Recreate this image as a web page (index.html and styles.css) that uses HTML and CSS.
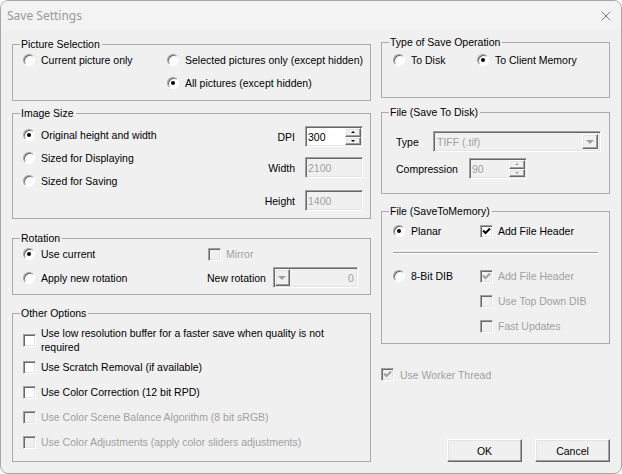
FILE: index.html
```html
<!DOCTYPE html>
<html lang="en">
  <head>
    <meta charset="UTF-8" />
    <title>Save Settings</title>
    <link rel="stylesheet" href="styles.css">
  </head>
  <body>
    <div class="window">
      <div class="titlebar">
        <span class="title">Save Settings</span>
        <svg class="close" width="10" height="10" viewBox="0 0 10 10">
          <path d="M0.5 0.5 L9.5 9.5 M9.5 0.5 L0.5 9.5" stroke="#7a7a7a" stroke-width="1" fill="none" />
        </svg>
      </div>

      <div class="content">
        <div class="col-left">
          <div class="group pic-sel">
            <div class="group-title">Picture Selection</div>
            <div class="pic-grid">
              <div class="opt"><span class="radio"></span>Current picture only</div>
              <div class="opt"><span class="radio"></span>Selected pictures only (except hidden)</div>
              <span></span>
              <div class="opt"><span class="radio on"></span>All pictures (except hidden)</div>
            </div>
          </div>

          <div class="group img-size">
            <div class="group-title">Image Size</div>
            <div class="img-body">
              <div class="radio-list">
                <div class="opt"><span class="radio on"></span>Original height and width</div>
                <div class="opt"><span class="radio"></span>Sized for Displaying</div>
                <div class="opt"><span class="radio"></span>Sized for Saving</div>
              </div>
              <div class="dims">
                <div class="dim-row">
                  <span>DPI</span>
                  <div class="field sunken">
                    <span>300</span>
                    <div class="spin">
                      <div class="spin-btn raised"><span class="tri-up"></span></div>
                      <div class="spin-btn raised"><span class="tri-down"></span></div>
                    </div>
                  </div>
                </div>
                <div class="dim-row gap-10">
                  <span>Width</span>
                  <div class="field sunken off">2100</div>
                </div>
                <div class="dim-row gap-12">
                  <span>Height</span>
                  <div class="field sunken off">1400</div>
                </div>
              </div>
            </div>
          </div>

          <div class="group rotation">
            <div class="group-title">Rotation</div>
            <div class="rot-grid">
              <div class="opt"><span class="radio on"></span>Use current</div>
              <div class="opt dim"><span class="check off"></span>Mirror</div>
              <div class="opt"><span class="radio"></span>Apply new rotation</div>
              <div class="opt">
                New rotation
                <div class="rot-combo sunken">
                  <div class="drop-btn raised"><span class="tri-drop"></span></div>
                  <span class="rot-value">0</span>
                </div>
              </div>
            </div>
          </div>

          <div class="group other">
            <div class="group-title">Other Options</div>
            <div class="check-list">
              <div class="opt"><span class="check"></span><span class="wrap">Use low resolution buffer for a faster save when quality is not required</span></div>
              <div class="opt first-after"><span class="check"></span>Use Scratch Removal (if available)</div>
              <div class="opt"><span class="check"></span>Use Color Correction (12 bit RPD)</div>
              <div class="opt dim"><span class="check off"></span>Use Color Scene Balance Algorithm (8 bit sRGB)</div>
              <div class="opt dim"><span class="check off"></span>Use Color Adjustments (apply color sliders adjustments)</div>
            </div>
          </div>
        </div>

        <div class="col-right">
          <div class="group save-type">
            <div class="group-title">Type of Save Operation</div>
            <div class="type-grid">
              <div class="opt"><span class="radio"></span>To Disk</div>
              <div class="opt"><span class="radio on"></span>To Client Memory</div>
            </div>
          </div>

          <div class="group disk">
            <div class="group-title">File (Save To Disk)</div>
            <div class="disk-body">
              <div class="disk-row">
                <span class="lbl-type">Type</span>
                <div class="combo sunken off">
                  <span>TIFF (.tif)</span>
                  <div class="drop-btn raised"><span class="tri-drop"></span></div>
                </div>
              </div>
              <div class="disk-row second">
                <span class="lbl-comp">Compression</span>
                <div class="field sunken off">
                  <span>90</span>
                  <div class="spin">
                    <div class="spin-btn raised"><span class="tri-up grey"></span></div>
                    <div class="spin-btn raised"><span class="tri-down grey"></span></div>
                  </div>
                </div>
              </div>
            </div>
          </div>

          <div class="group memory">
            <div class="group-title">File (SaveToMemory)</div>
            <div class="mem-row">
              <div class="opt"><span class="radio on"></span>Planar</div>
              <div class="opt">
                <span class="check">
                  <svg width="9" height="9" viewBox="0 0 9 9"><path d="M1 3.5 L3.5 6 L8 1.5" stroke="#000" stroke-width="2" fill="none" /></svg>
                </span>Add File Header
              </div>
            </div>
            <div class="separator"></div>
            <div class="mem-row lower">
              <div class="opt"><span class="radio"></span>8-Bit DIB</div>
              <div class="mem-checks">
                <div class="opt dim">
                  <span class="check off">
                    <svg width="9" height="9" viewBox="0 0 9 9"><path d="M1 3.5 L3.5 6 L8 1.5" stroke="#a0a0a0" stroke-width="2" fill="none" /></svg>
                  </span>Add File Header
                </div>
                <div class="opt dim"><span class="check off"></span>Use Top Down DIB</div>
                <div class="opt dim"><span class="check off"></span>Fast Updates</div>
              </div>
            </div>
          </div>

          <div class="opt dim worker">
            <span class="check off">
              <svg width="9" height="9" viewBox="0 0 9 9"><path d="M1 3.5 L3.5 6 L8 1.5" stroke="#a0a0a0" stroke-width="2" fill="none" /></svg>
            </span>Use Worker Thread
          </div>

          <div class="actions">
            <div class="btn raised">OK</div>
            <div class="btn raised">Cancel</div>
          </div>
        </div>
      </div>
    </div>
  </body>
</html>
```

FILE: styles.css
```css
:root {
  --face: #f0f0f0;
  --light: #ffffff;
  --mid-light: #e3e3e3;
  --shadow: #a0a0a0;
  --dark: #696969;
  --frame: #aaaaaa;
  --disabled-text: #a0a0a0;
}

body {
  margin: 0;
  font-family: "Liberation Sans", Arial, sans-serif;
  font-size: 10.5px;
  color: #000;
  background: #ffffff;
}

.window {
  width: 622px;
  height: 474px;
  box-sizing: border-box;
  border: 1px solid #a8a8a8;
  border-radius: 8px;
  background: var(--face);
  overflow: hidden;
}

.titlebar {
  height: 29px;
  background: #f3f3f3;
  display: flex;
  align-items: center;
  justify-content: space-between;
  padding: 0 10px 0 6px;
}

.title {
  font-family: "Noto Sans", "Open Sans", sans-serif;
  font-size: 12px;
  color: #999;
}

.content {
  display: flex;
  gap: 10px;
  padding-left: 11px;
}

.col-left {
  width: 359px;
  display: flex;
  flex-direction: column;
}

.col-right {
  width: 229px;
  display: flex;
  flex-direction: column;
}

/* group boxes */
.group {
  border: 1px solid var(--frame);
  box-sizing: border-box;
}

.group-title {
  margin: -7px 0 0 7px;
  padding: 0 2px 0 1px;
  line-height: 13px;
  background: var(--face);
  width: fit-content;
}

.pic-sel { margin-top: 14px; height: 57px; }
.img-size { margin-top: 12px; height: 106px; }
.rotation { margin-top: 19px; height: 57px; }
.other { margin-top: 18px; height: 149px; }

.save-type { margin-top: 12px; height: 56px; }
.disk { margin-top: 14px; height: 82px; }
.memory { margin-top: 17px; height: 133px; }

/* controls */
.opt {
  display: flex;
  align-items: center;
  white-space: nowrap;
  line-height: 14px;
}

.dim {
  color: var(--disabled-text);
}

.radio {
  width: 12px;
  height: 12px;
  box-sizing: border-box;
  border-radius: 50%;
  background: #fff;
  border: 1px solid;
  border-color: var(--shadow) var(--light) var(--light) var(--shadow);
  box-shadow: inset 1px 1px 0 var(--dark);
  margin-right: 6px;
  flex: none;
  display: flex;
  align-items: center;
  justify-content: center;
}

.radio.on::after {
  content: "";
  width: 4px;
  height: 4px;
  border-radius: 50%;
  background: #000;
}

.check {
  width: 13px;
  height: 13px;
  box-sizing: border-box;
  background: #fff;
  border: 1px solid;
  border-color: var(--shadow) var(--light) var(--light) var(--shadow);
  box-shadow: inset 1px 1px 0 var(--dark), inset -1px -1px 0 var(--mid-light);
  margin-right: 5px;
  flex: none;
  display: flex;
  align-items: center;
  justify-content: center;
}

.check.off {
  background: var(--face);
}

.sunken {
  box-sizing: border-box;
  border: 1px solid;
  border-color: var(--shadow) var(--light) var(--light) var(--shadow);
  box-shadow: inset 1px 1px 0 var(--dark), inset -1px -1px 0 var(--mid-light);
}

.raised {
  box-sizing: border-box;
  background: var(--face);
  border: 1px solid;
  border-color: var(--light) var(--dark) var(--dark) var(--light);
  box-shadow: inset -1px -1px 0 var(--shadow), inset 1px 1px 0 var(--mid-light);
}

.field {
  width: 58px;
  height: 21px;
  background: #fff;
  display: flex;
  align-items: center;
  padding: 1px 1px 1px 2px;
}

.field.off {
  background: var(--face);
  color: var(--disabled-text);
}

.spin {
  margin-left: auto;
  width: 16px;
  height: 100%;
  display: flex;
  flex-direction: column;
}

.spin-btn {
  flex: 1;
  display: flex;
  align-items: center;
  justify-content: center;
}

.tri-up,
.tri-down {
  width: 0;
  height: 0;
  border-left: 2px solid transparent;
  border-right: 2px solid transparent;
}

.tri-up { border-bottom: 2px solid #000; }
.tri-down { border-top: 2px solid #000; }
.tri-up.grey { border-bottom-color: var(--disabled-text); }
.tri-down.grey { border-top-color: var(--disabled-text); }

.tri-drop {
  width: 0;
  height: 0;
  border-left: 4px solid transparent;
  border-right: 4px solid transparent;
  border-top: 4px solid var(--disabled-text);
}

.drop-btn {
  width: 16px;
  height: 100%;
  display: flex;
  align-items: center;
  justify-content: center;
  flex: none;
}

/* picture selection */
.pic-grid {
  display: grid;
  grid-template-columns: 144px 1fr;
  grid-auto-rows: 16px;
  row-gap: 7px;
  padding-left: 10px;
  margin-top: 1px;
}

/* image size */
.img-body {
  display: flex;
  justify-content: space-between;
  padding: 0 7px 0 10px;
}

.radio-list {
  display: flex;
  flex-direction: column;
  gap: 7px;
  padding-top: 7px;
}

.radio-list .opt {
  height: 16px;
}

.dims {
  padding-top: 6px;
}

.dim-row {
  display: flex;
  align-items: center;
  justify-content: flex-end;
  gap: 10px;
}

.gap-10 { margin-top: 10px; }
.gap-12 { margin-top: 12px; }

/* rotation */
.rot-grid {
  display: grid;
  grid-template-columns: 184px 1fr;
  grid-template-rows: 16px 21px;
  row-gap: 5px;
  align-items: center;
  padding-left: 10px;
  margin-top: 1px;
}

.rot-grid .dim .check {
  margin-left: 1px;
}

.rot-combo {
  width: 85px;
  height: 21px;
  margin-left: 7px;
  display: flex;
  align-items: center;
  padding: 1px 3px 1px 1px;
  color: var(--disabled-text);
}

.rot-combo .drop-btn {
  width: 15px;
}

.rot-value {
  margin-left: auto;
}

/* other options */
.check-list {
  padding-left: 10px;
  display: flex;
  flex-direction: column;
  gap: 11px;
  padding-top: 6px;
}

.check-list .first-after {
  margin-top: -5px;
}

.wrap {
  white-space: normal;
  max-width: 300px;
}

/* type of save */
.type-grid {
  display: grid;
  grid-template-columns: 84px auto;
  grid-auto-rows: 16px;
  padding-left: 11px;
  margin-top: 3px;
}

/* save to disk */
.disk-body {
  padding: 12px 8px 0 14px;
}

.disk-row {
  display: flex;
  align-items: center;
}

.disk-row.second {
  margin-top: 6px;
}

.lbl-type { width: 37px; }
.lbl-comp { width: 73px; }

.combo {
  flex: 1;
  height: 21px;
  display: flex;
  align-items: center;
  padding: 2px 2px 2px 3px;
}

.combo.off {
  color: var(--disabled-text);
}

.combo .drop-btn {
  margin-left: auto;
}

/* save to memory */
.mem-row {
  display: grid;
  grid-template-columns: 87px auto;
  padding-left: 11px;
  margin-top: 5px;
  align-items: start;
}

.mem-row .opt {
  height: 16px;
}

.mem-row.lower {
  margin-top: 14px;
}

.separator {
  margin: 13px 11px 0;
  border-top: 1px solid var(--shadow);
  border-bottom: 1px solid var(--light);
}

.mem-checks {
  display: flex;
  flex-direction: column;
  gap: 9px;
}

.worker {
  margin-top: 24px;
  height: 13px;
}

.worker .check {
  margin-right: 6px;
}

.actions {
  display: flex;
  justify-content: flex-end;
  gap: 13px;
  margin-top: 58px;
}

.btn {
  width: 75px;
  height: 23px;
  display: flex;
  align-items: center;
  justify-content: center;
}
```
